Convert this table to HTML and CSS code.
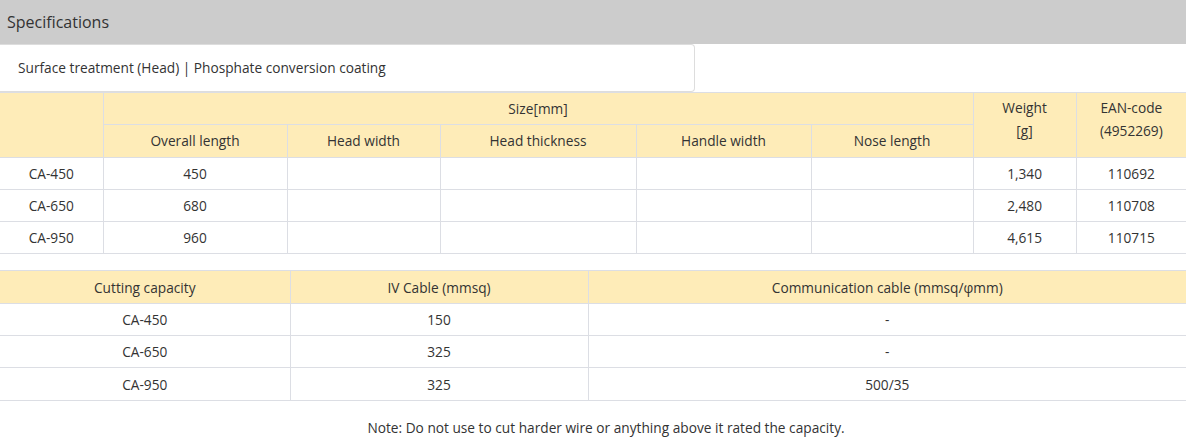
FILE: index.html
```html
<!DOCTYPE html>
<html lang="en">
<head>
<meta charset="utf-8">
<title>Specifications</title>
<link rel="stylesheet" href="styles.css">
</head>
<body>
<div class="spec">
  <div class="spec-title">Specifications</div>
  <div class="treatment">Surface treatment (Head) | Phosphate conversion coating</div>
  <table class="grid grid-size">
    <colgroup>
      <col class="c-model"><col class="c-overall"><col class="c-headw"><col class="c-headt"><col class="c-handle"><col class="c-nose"><col class="c-weight"><col class="c-ean">
    </colgroup>
    <thead>
      <tr>
        <th rowspan="2"></th>
        <th colspan="5">Size[mm]</th>
        <th rowspan="2" class="top">Weight<br>[g]</th>
        <th rowspan="2" class="top">EAN-code<br>(4952269)</th>
      </tr>
      <tr>
        <th>Overall length</th>
        <th>Head width</th>
        <th>Head thickness</th>
        <th>Handle width</th>
        <th>Nose length</th>
      </tr>
    </thead>
    <tbody>
      <tr><td>CA-450</td><td>450</td><td></td><td></td><td></td><td></td><td>1,340</td><td>110692</td></tr>
      <tr><td>CA-650</td><td>680</td><td></td><td></td><td></td><td></td><td>2,480</td><td>110708</td></tr>
      <tr><td>CA-950</td><td>960</td><td></td><td></td><td></td><td></td><td>4,615</td><td>110715</td></tr>
    </tbody>
  </table>
  <table class="grid grid-cap">
    <colgroup>
      <col class="c-cap"><col class="c-iv"><col class="c-comm">
    </colgroup>
    <thead>
      <tr><th>Cutting capacity</th><th>IV Cable (mmsq)</th><th>Communication cable (mmsq/φmm)</th></tr>
    </thead>
    <tbody>
      <tr><td>CA-450</td><td>150</td><td>-</td></tr>
      <tr><td>CA-650</td><td>325</td><td>-</td></tr>
      <tr><td>CA-950</td><td>325</td><td>500/35</td></tr>
    </tbody>
  </table>
  <p class="note">Note: Do not use to cut harder wire or anything above it rated the capacity.</p>
</div>
</body>
</html>
```
FILE: styles.css
```css
* { box-sizing: border-box; }
html, body { margin: 0; padding: 0; background: #fff; }
body {
  font-family: "Open Sans", "Noto Sans", sans-serif;
  color: #333;
  font-size: 13.7px;
}
.spec { width: 1186px; }
.spec-title {
  height: 44px;
  background: #cccccc;
  padding-left: 7px;
  font-size: 16px;
  line-height: 44px;
  color: #333;
}
.treatment {
  width: 695px;
  height: 48px;
  border: 1px solid #dddddd;
  border-left: none;
  border-radius: 0 4px 4px 0;
  padding-left: 18px;
  line-height: 46px;
}
.grid {
  width: 1186px;
  border-collapse: collapse;
  table-layout: fixed;
}
.grid th, .grid td {
  border: 1px solid #dcdee4;
  padding: 0;
  height: 32.3px;
  text-align: center;
  font-weight: normal;
  vertical-align: middle;
  line-height: 23px;
}
.grid th { background: #feecb8; }
.grid th.top { vertical-align: top; padding-top: 3px; }
.grid tr > :first-child { border-left: none; }
.grid tr > :last-child { border-right: none; }
.grid-cap { margin-top: 16px; }
.c-model { width: 103px; }
.c-overall { width: 184px; }
.c-headw { width: 153px; }
.c-headt { width: 196px; }
.c-handle { width: 175px; }
.c-nose { width: 162px; }
.c-weight { width: 103px; }
.c-ean { width: 110px; }
.c-cap { width: 290px; }
.c-iv { width: 298px; }
.c-comm { width: 598px; }
.note {
  margin: 16px 0 0;
  padding-left: 26px;
  text-align: center;
  line-height: 22px;
}
```
